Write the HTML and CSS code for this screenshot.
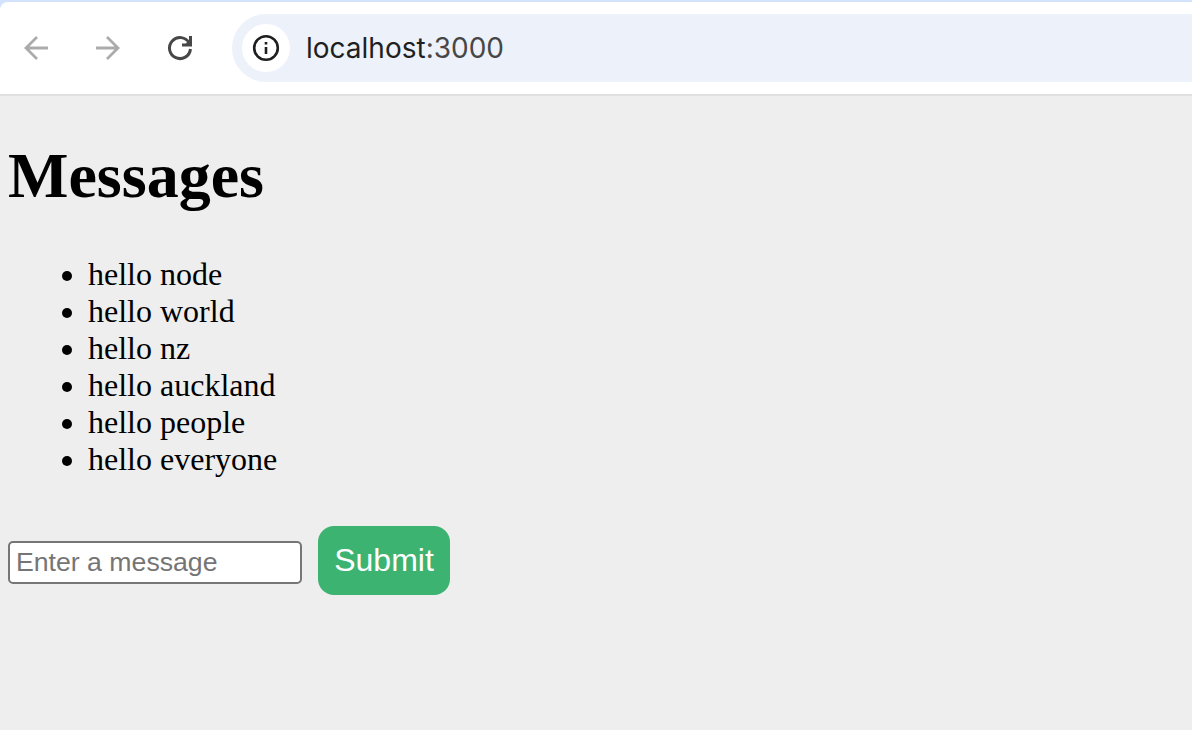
FILE: index.html
```html
<!DOCTYPE html>
<html lang="en">
<head>
<meta charset="utf-8">
<title>Messages</title>
<link rel="stylesheet" href="styles.css">
</head>
<body>
<header class="window-frame">
  <div class="toolbar">
    <svg class="nav" viewBox="0 0 32 32"><path d="M28 16H6.5M17 5L6 16l11 11"/></svg>
    <svg class="nav" viewBox="0 0 32 32"><path d="M4 16h21.5M15 5l11 11-11 11"/></svg>
    <svg class="nav reload" viewBox="0 0 32 32"><path d="M25.2 11A10.5 10.5 0 1 0 26.45 17M26.5 4v9H18M22 12l4 1"/></svg>
    <div class="address">
      <span class="info"><svg viewBox="0 0 28 28"><circle cx="14" cy="14" r="11.8"/><path d="M14 13v7M14 8v2.6"/></svg></span>
      <span class="url">localhost<span class="port">:3000</span></span>
    </div>
  </div>
</header>
<main class="page">
  <h1 class="title">Messages</h1>
  <ul class="messages">
    <li>hello node</li>
    <li>hello world</li>
    <li>hello nz</li>
    <li>hello auckland</li>
    <li>hello people</li>
    <li>hello everyone</li>
  </ul>
  <form class="composer">
    <input class="field" type="text" placeholder="Enter a message">
    <button class="submit" type="button">Submit</button>
  </form>
</main>
</body>
</html>
```
FILE: styles.css
```css
* { box-sizing: border-box; }
body { margin: 0; height: 730px; overflow: hidden; background: #eee; display: flex; flex-direction: column; }
.window-frame { height: 96px; flex: none; background: #d3e3fd; padding-top: 2px; border-bottom: 2px solid #e0e0e0; }
.toolbar { height: 92px; background: #fff; display: flex; align-items: center; padding-left: 20px; border-top-left-radius: 8px; }
.nav { width: 32px; height: 32px; margin-right: 40px; fill: none; stroke: #ababab; stroke-width: 2.8; flex: none; }
.reload { stroke: #474747; stroke-width: 3; margin-right: 36px; }
.address { flex: 1; height: 68px; background: #edf1fa; border-radius: 34px 0 0 34px; display: flex; align-items: center; padding-left: 10px; }
.info { width: 48px; height: 48px; border-radius: 50%; background: #fff; display: flex; align-items: center; justify-content: center; margin-right: 16px; }
.info svg { width: 28px; height: 28px; fill: none; stroke: #1f1f1f; stroke-width: 2.6; }
.url { font: 28px/34px Inter, sans-serif; color: #1f1f1f; }
.port { color: #474747; }
.page { padding: 43px 8px 0; font: 32px/37px "Liberation Serif", serif; color: #000; }
.title { margin: 0; font-size: 64px; line-height: 74px; font-weight: 700; }
.messages { margin: 43px 0 48px; padding-left: 80px; }
.composer { display: flex; align-items: flex-start; gap: 16px; }
.field { width: 294px; height: 43px; margin-top: 15px; border: 2px solid #767676; border-radius: 5px; background: #fff; padding: 2px 6px; font: 26.67px "Liberation Sans", sans-serif; }
.field::placeholder { color: #757575; }
.submit { width: 132px; height: 69px; border: 0; border-radius: 16px; padding: 0; background: #3cb371; color: #fff; font: 32px "Liberation Sans", sans-serif; }
```
